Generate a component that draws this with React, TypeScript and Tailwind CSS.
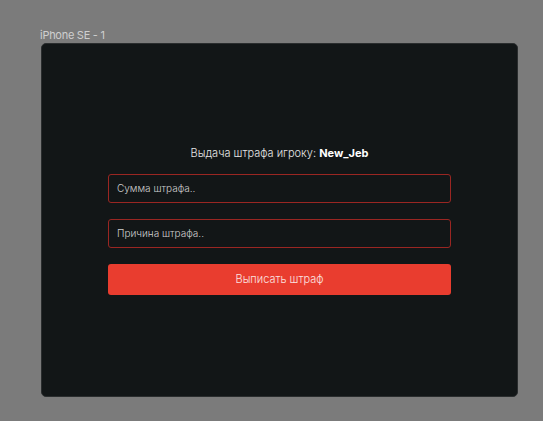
export default function App() {
  return (
    <div
      className="w-[543px] h-[421px] bg-[#7b7b7b] pt-[28px] pl-[40px]"
      style={{ fontFamily: 'Inter, "Noto Sans", sans-serif' }}
    >
      <div className="text-[11px] leading-[14px] text-[#cfcfcf] tracking-tight">iPhone SE - 1</div>
      <div className="mt-[1px] ml-px w-[477px] h-[354px] bg-[#121617] rounded-[5px] border border-[#2a2d2e] flex flex-col items-center pt-[101px]">
        <div className="text-[11px] leading-[16px] text-[#e6e6e6] font-light">
          Выдача штрафа игроку: <span className="font-bold text-white">New_Jeb</span>
        </div>
        <div className="mt-[13px] w-[343px] flex flex-col">
          <div className="h-[29px] rounded-[3px] border border-[#9a2622] flex items-center px-[8px] text-[10px] text-[#cfcfcf] font-light">
            Сумма штрафа..
          </div>
          <div className="mt-[16px] h-[29px] rounded-[3px] border border-[#9a2622] flex items-center px-[8px] text-[10px] text-[#cfcfcf] font-light">
            Причина штрафа..
          </div>
          <button className="mt-[16px] h-[31px] rounded-[3px] bg-[#e93d2f] text-[11px] text-[#fbe3e0] font-light">
            Выписать штраф
          </button>
        </div>
      </div>
    </div>
  )
}
